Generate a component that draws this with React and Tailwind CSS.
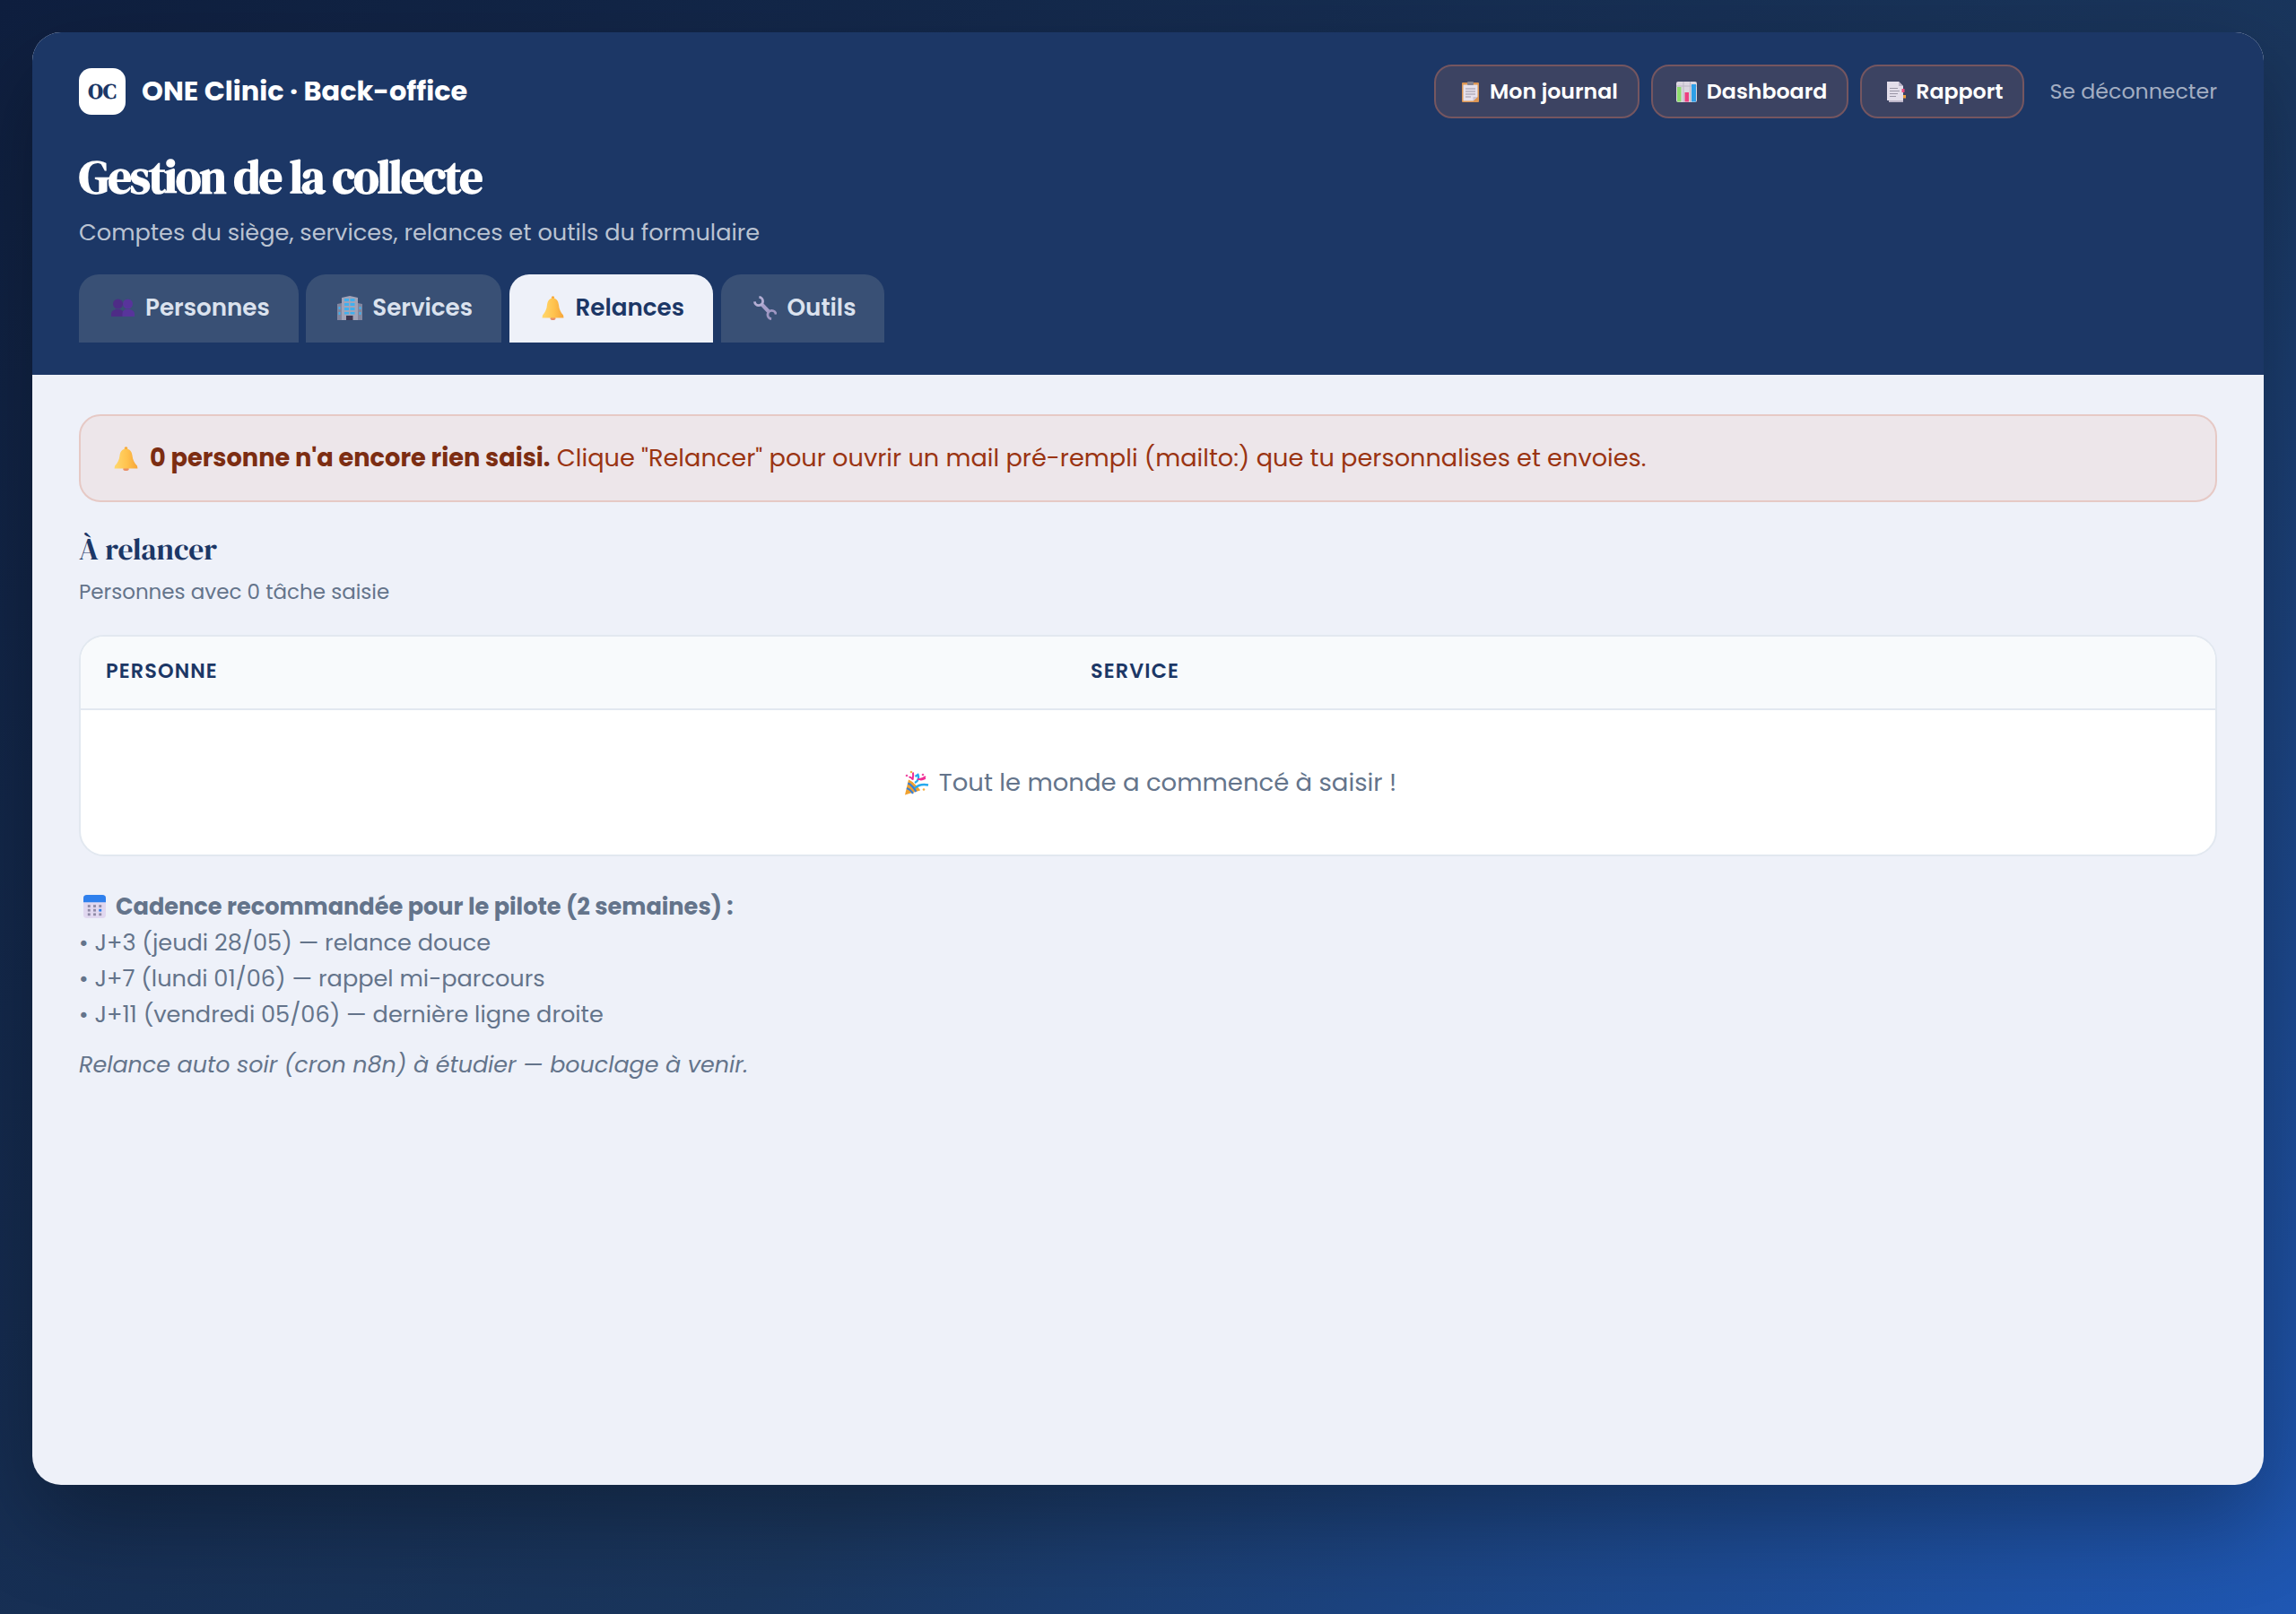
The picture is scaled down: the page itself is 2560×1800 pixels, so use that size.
import React from "react";

const sans = "font-['Poppins','Inter','Noto_Sans',sans-serif]";
const serif = "font-['DM_Serif_Display','Fraunces','Playfair_Display','Liberation_Serif',serif]";

function People({ className }) {
  return (
    <svg viewBox="0 0 26 20" className={className}>
      <g fill="#4e2c86">
        <circle cx="7.500" cy="6" r="5.500" />
        <path d="M0 20v-3c0-3 3-5 7.500-5s6 2 6 5v3z" />
      </g>
      <g fill="#58349b">
        <circle cx="18.500" cy="6" r="5.500" />
        <path d="M12.500 20v-3c0-3 1.500-5 6-5s7.500 2 7.500 5v3z" />
      </g>
    </svg>
  );
}
function Building({ className }) {
  return (
    <svg viewBox="0 0 28 27" className={className}>
      <path d="M0 9l5-1v19H0zM23 8l5 1v18h-5z" fill="#82869f" />
      <path d="M5 2l9-2 9 2v25H5z" fill="#a1a3b8" />
      <g fill="#3fb0ee">
        <rect x="8" y="3" width="5" height="3" /><rect x="14.500" y="3" width="5" height="3" />
        <rect x="8" y="8" width="5" height="3" /><rect x="14.500" y="8" width="5" height="3" />
        <rect x="8" y="13" width="5" height="3" /><rect x="14.500" y="13" width="5" height="3" />
        <rect x="8" y="18" width="5" height="2.500" /><rect x="14.500" y="18" width="5" height="2.500" />
        <rect x="1.500" y="12" width="2" height="3" /><rect x="1.500" y="18" width="2" height="3" />
        <rect x="24.500" y="12" width="2" height="3" /><rect x="24.500" y="18" width="2" height="3" />
      </g>
      <rect x="10" y="22" width="7.500" height="5" fill="#3c3550" />
    </svg>
  );
}
function Bell({ className, id }) {
  return (
    <svg viewBox="0 0 25 27" preserveAspectRatio="none" className={className}>
      <defs>
        <linearGradient id={id} x1="0" x2="1" y1="0" y2="0">
          <stop offset="0" stopColor="#ffd86e" />
          <stop offset="0.55" stopColor="#ffc24d" />
          <stop offset="1" stopColor="#f6a53a" />
        </linearGradient>
      </defs>
      <circle cx="12.500" cy="2" r="1.700" fill="#f7a93a" />
      <ellipse cx="12.500" cy="25" rx="3" ry="2" fill="#e98f66" />
      <path d="M12.500 2.500C8 2.500 6.500 6.500 6 10c-.5 5-2 8-5 11.500L.5 24.500h24l-.5-3C21 18 19.500 15 19 10c-.5-3.500-2-7.500-6.500-7.500z" fill={`url(#${id})`} />
    </svg>
  );
}
function Wrench({ className }) {
  return (
    <svg viewBox="0 0 26 27" className={className} fill="none">
      <path d="M9 9l9 9.500" stroke="#a79fca" strokeWidth="4" />
      <path d="M6.400 1.400A4.600 4.600 0 1 1 1.400 6.400" stroke="#b4aed4" strokeWidth="2.800" />
      <path d="M25.100 20.600A4.600 4.600 0 1 0 20.100 25.600" stroke="#9f97c3" strokeWidth="2.800" />
    </svg>
  );
}
function Clipboard({ className }) {
  return (
    <svg viewBox="0 0 19 23" className={className}>
      <rect x="0" y="1" width="19" height="22" rx="1" fill="#dd9653" />
      <path d="M1.500 3.500h16V17l-5 4.500H1.500z" fill="#e6e1ec" />
      <path d="M17.500 17l-5 4.500V17z" fill="#c9c2d3" />
      <rect x="6" y="0" width="7" height="4" rx="1" fill="#86838f" />
      <path d="M4 8h11M4 11h11M4 14h11M4 17h6" stroke="#9a96a6" strokeWidth="1.200" />
    </svg>
  );
}
function Chart({ className }) {
  return (
    <svg viewBox="0 0 23 23" className={className}>
      <rect x="0" y="0" width="23" height="23" rx="2" fill="#dbd6e0" />
      <path d="M8 0v23M15.500 0v23M0 5h23" stroke="#bdb8c6" strokeWidth="1" />
      <rect x="1" y="6" width="4.500" height="16.500" fill="#8ddc6e" />
      <rect x="9.500" y="12" width="4.500" height="10.500" fill="#ee3f80" />
      <rect x="17" y="3" width="5" height="19.500" fill="#2f9fe8" />
    </svg>
  );
}
function Report({ className }) {
  return (
    <svg viewBox="0 0 21 23" className={className}>
      <path d="M0 0h13l5 5v16H0z" fill="#e3deea" />
      <path d="M2 21h16v2H2z" fill="#bdb6c9" />
      <path d="M13 0l5 5h-5z" fill="#b9b2c6" />
      <path d="M3 7.500h9M3 10.500h11M3 13.500h9M3 16.500h7" stroke="#9a96a6" strokeWidth="1.200" />
      <rect x="16.500" y="8" width="3" height="4" fill="#e94c7f" />
      <rect x="18" y="15" width="3" height="3.500" fill="#eda23c" />
    </svg>
  );
}
function Popper({ className }) {
  return (
    <svg viewBox="0 0 28 28" className={className} fill="none">
      <path d="M1 27.500L5 10.500c2 .5 5 3 7.500 5.500 3 3 5.500 5.500 5.500 6.500z" fill="#f0a12f" />
      <path d="M3 20c2 .5 5 3 7 6M4.300 14.500c3 1 7.500 5.500 9 9.500" stroke="#3b7fd4" strokeWidth="2.200" />
      <path d="M5.500 8c1.500-1 2.500 0 4.500 2.500" stroke="#f02d94" strokeWidth="2" />
      <path d="M10 2.500c.5 3 0 6 -.5 8" stroke="#f02d94" strokeWidth="2" />
      <path d="M12 14c4-2 5-6 3.500-9l-3 2" stroke="#26a9ee" strokeWidth="2.400" />
      <path d="M15 10c4 .5 6-.5 9-3M18 10.500c2 .5 4-.5 6-1.500" stroke="#f02d94" strokeWidth="1.800" />
      <path d="M12 20c3-3 7-5 15-3.500" stroke="#26a9ee" strokeWidth="2.400" />
      <circle cx="8" cy="2" r="1.300" fill="#f2b24a" />
      <circle cx="3" cy="6" r="1.300" fill="#ee4fa5" />
      <circle cx="21" cy="5" r="1.300" fill="#ee4fa5" />
      <circle cx="22" cy="21.500" r="1.300" fill="#f2b24a" />
    </svg>
  );
}
function Calendar({ className }) {
  return (
    <svg viewBox="0 0 26 28" preserveAspectRatio="none" className={className}>
      <rect x="0" y="0" width="26" height="28" rx="4" fill="#e1d8f0" />
      <path d="M0 9V4a4 4 0 0 1 4-4h18a4 4 0 0 1 4 4v5z" fill="#2f80ed" />
      <g fill="#8f8aa6">
        <rect x="5" y="12" width="3" height="3" /><rect x="11.500" y="12" width="3" height="3" /><rect x="18" y="12" width="3" height="3" />
        <rect x="5" y="17" width="3" height="3" /><rect x="11.500" y="17" width="3" height="3" />
        <rect x="5" y="22" width="3" height="3" /><rect x="11.500" y="22" width="3" height="3" /><rect x="18" y="22" width="3" height="3" />
      </g>
      <rect x="18" y="17" width="3" height="3" fill="#2f80ed" />
    </svg>
  );
}

function HeadBtn({ icon, children }) {
  return (
    <a className="flex h-[60px] items-center gap-[7px] rounded-[20px] border-2 border-[#755660] bg-[#3c4362] pl-[23px] pr-[22px] text-[23.68px] font-semibold text-white">
      <span className="flex w-[30px] justify-center">{icon}</span>
      <span>{children}</span>
    </a>
  );
}

function Tab({ icon, children, active }) {
  return (
    <button
      className={`flex h-[76px] items-center gap-[8px] rounded-t-[22px] pb-[2px] pl-[32px] pr-[32px] text-[26.2px] font-semibold ${
        active ? "bg-[#eef1f9] text-[#1c3766]" : "bg-[#395075] text-[#dbe2ee]"
      }`}
    >
      <span className="flex w-[34px] justify-center">{icon}</span>
      <span>{children}</span>
    </button>
  );
}

export default function App() {
  return (
    <div className={`min-h-[1800px] bg-[linear-gradient(135deg,#0f1f3f_0%,#1a365d_60%,#1f57b3_100%)] px-[36px] pt-[36px] ${sans}`}>
      <div className="flex h-[1620px] flex-col overflow-hidden rounded-[32px] bg-[#eef1f9] shadow-[0_40px_100px_rgba(0,0,0,0.3)]">
        <header className="bg-[#1c3766] px-[52px] pb-[36px] pt-[36px]">
          <div className="flex h-[60px] items-center justify-between">
            <div className="flex items-center gap-[18px]">
              <div className={`flex h-[52px] w-[52px] items-center justify-center rounded-[14px] bg-white text-[24px] font-bold text-[#1c3766] ${serif}`}>
                OC
              </div>
              <div className="pb-[1px] text-[30.4px] font-bold text-white">ONE Clinic · Back-office</div>
            </div>
            <nav className="flex items-center gap-[13px]">
              <HeadBtn icon={<Clipboard className="h-[23px] w-[19px]" />}>Mon journal</HeadBtn>
              <HeadBtn icon={<Chart className="h-[23px] w-[23px]" />}>Dashboard</HeadBtn>
              <HeadBtn icon={<Report className="h-[23px] w-[21px]" />}>Rapport</HeadBtn>
              <span className="ml-[15px] whitespace-nowrap text-[23.68px] text-[#a3aec2]">Se déconnecter</span>
            </nav>
          </div>
          <h1 className={`mt-[35px] text-[52px] font-bold leading-[60px] tracking-[-1.7px] text-white ${serif}`}>Gestion de la collecte</h1>
          <p className="mt-[12px] text-[25.6px] leading-[40px] text-[#bac3d2]">Comptes du siège, services, relances et outils du formulaire</p>
          <div className="mt-[27px] flex gap-[8.5px]">
            <Tab icon={<People className="h-[20px] w-[26px]" />}>Personnes</Tab>
            <Tab icon={<Building className="h-[27px] w-[28px]" />}>Services</Tab>
            <Tab active icon={<Bell id="b1" className="h-[27px] w-[25px]" />}>Relances</Tab>
            <Tab icon={<Wrench className="h-[27px] w-[26px]" />}>Outils</Tab>
          </div>
        </header>
        <main className="flex-1 px-[52px] pt-[44px] text-[#64748b]">
          <div className="flex h-[98px] items-center gap-[13px] rounded-[24px] border-2 border-[#e6c9c5] bg-[#ede6ea] pl-[37px] text-[27.2px] text-[#9a3412]">
            <Bell id="b2" className="h-[27px] w-[27px]" />
            <p><strong className="font-bold text-[#7c2d12]">0 personne n'a encore rien saisi.</strong> Clique "Relancer" pour ouvrir un mail pré-rempli (mailto:) que tu personnalises et envoies.</p>
          </div>
          <h2 className={`mt-[30px] text-[33.6px] font-normal leading-[44px] text-[#1c3766] ${serif}`}>À relancer</h2>
          <p className="mt-[10px] text-[23px] leading-[32px]">Personnes avec 0 tâche saisie</p>
          <section className="mt-[32px] h-[247px] overflow-hidden rounded-[28px] border-2 border-[#e2e8f0] bg-white">
            <div className="grid h-[82px] grid-cols-[1098px_1fr] items-center border-b-2 border-[#e2e8f0] bg-[#f8fafc] pb-[3px] pl-[28px] text-[22.4px] font-semibold tracking-[1.12px] text-[#1c3766]">
              <span>PERSONNE</span>
              <span>SERVICE</span>
            </div>
            <div className="flex h-[161px] items-center justify-center gap-[11px] text-[27.5px]">
              <span className="flex w-[33px] justify-end"><Popper className="h-[28px] w-[28px]" /></span>
              <span>Tout le monde a commencé à saisir !</span>
            </div>
          </section>
          <div className="mt-[36px] text-[25.6px] leading-[40px]">
            <p className="flex items-center gap-[11px] font-bold"><Calendar className="ml-[5px] h-[26px] w-[25px]" /><span>Cadence recommandée pour le pilote (2 semaines) :</span></p>
            <p>• J+3 (jeudi 28/05) — relance douce</p>
            <p>• J+7 (lundi 01/06) — rappel mi-parcours</p>
            <p>• J+11 (vendredi 05/06) — dernière ligne droite</p>
            <p className="mt-[16px] text-[25.4px] italic">Relance auto soir (cron n8n) à étudier — bouclage à venir.</p>
          </div>
        </main>
      </div>
    </div>
  );
}
